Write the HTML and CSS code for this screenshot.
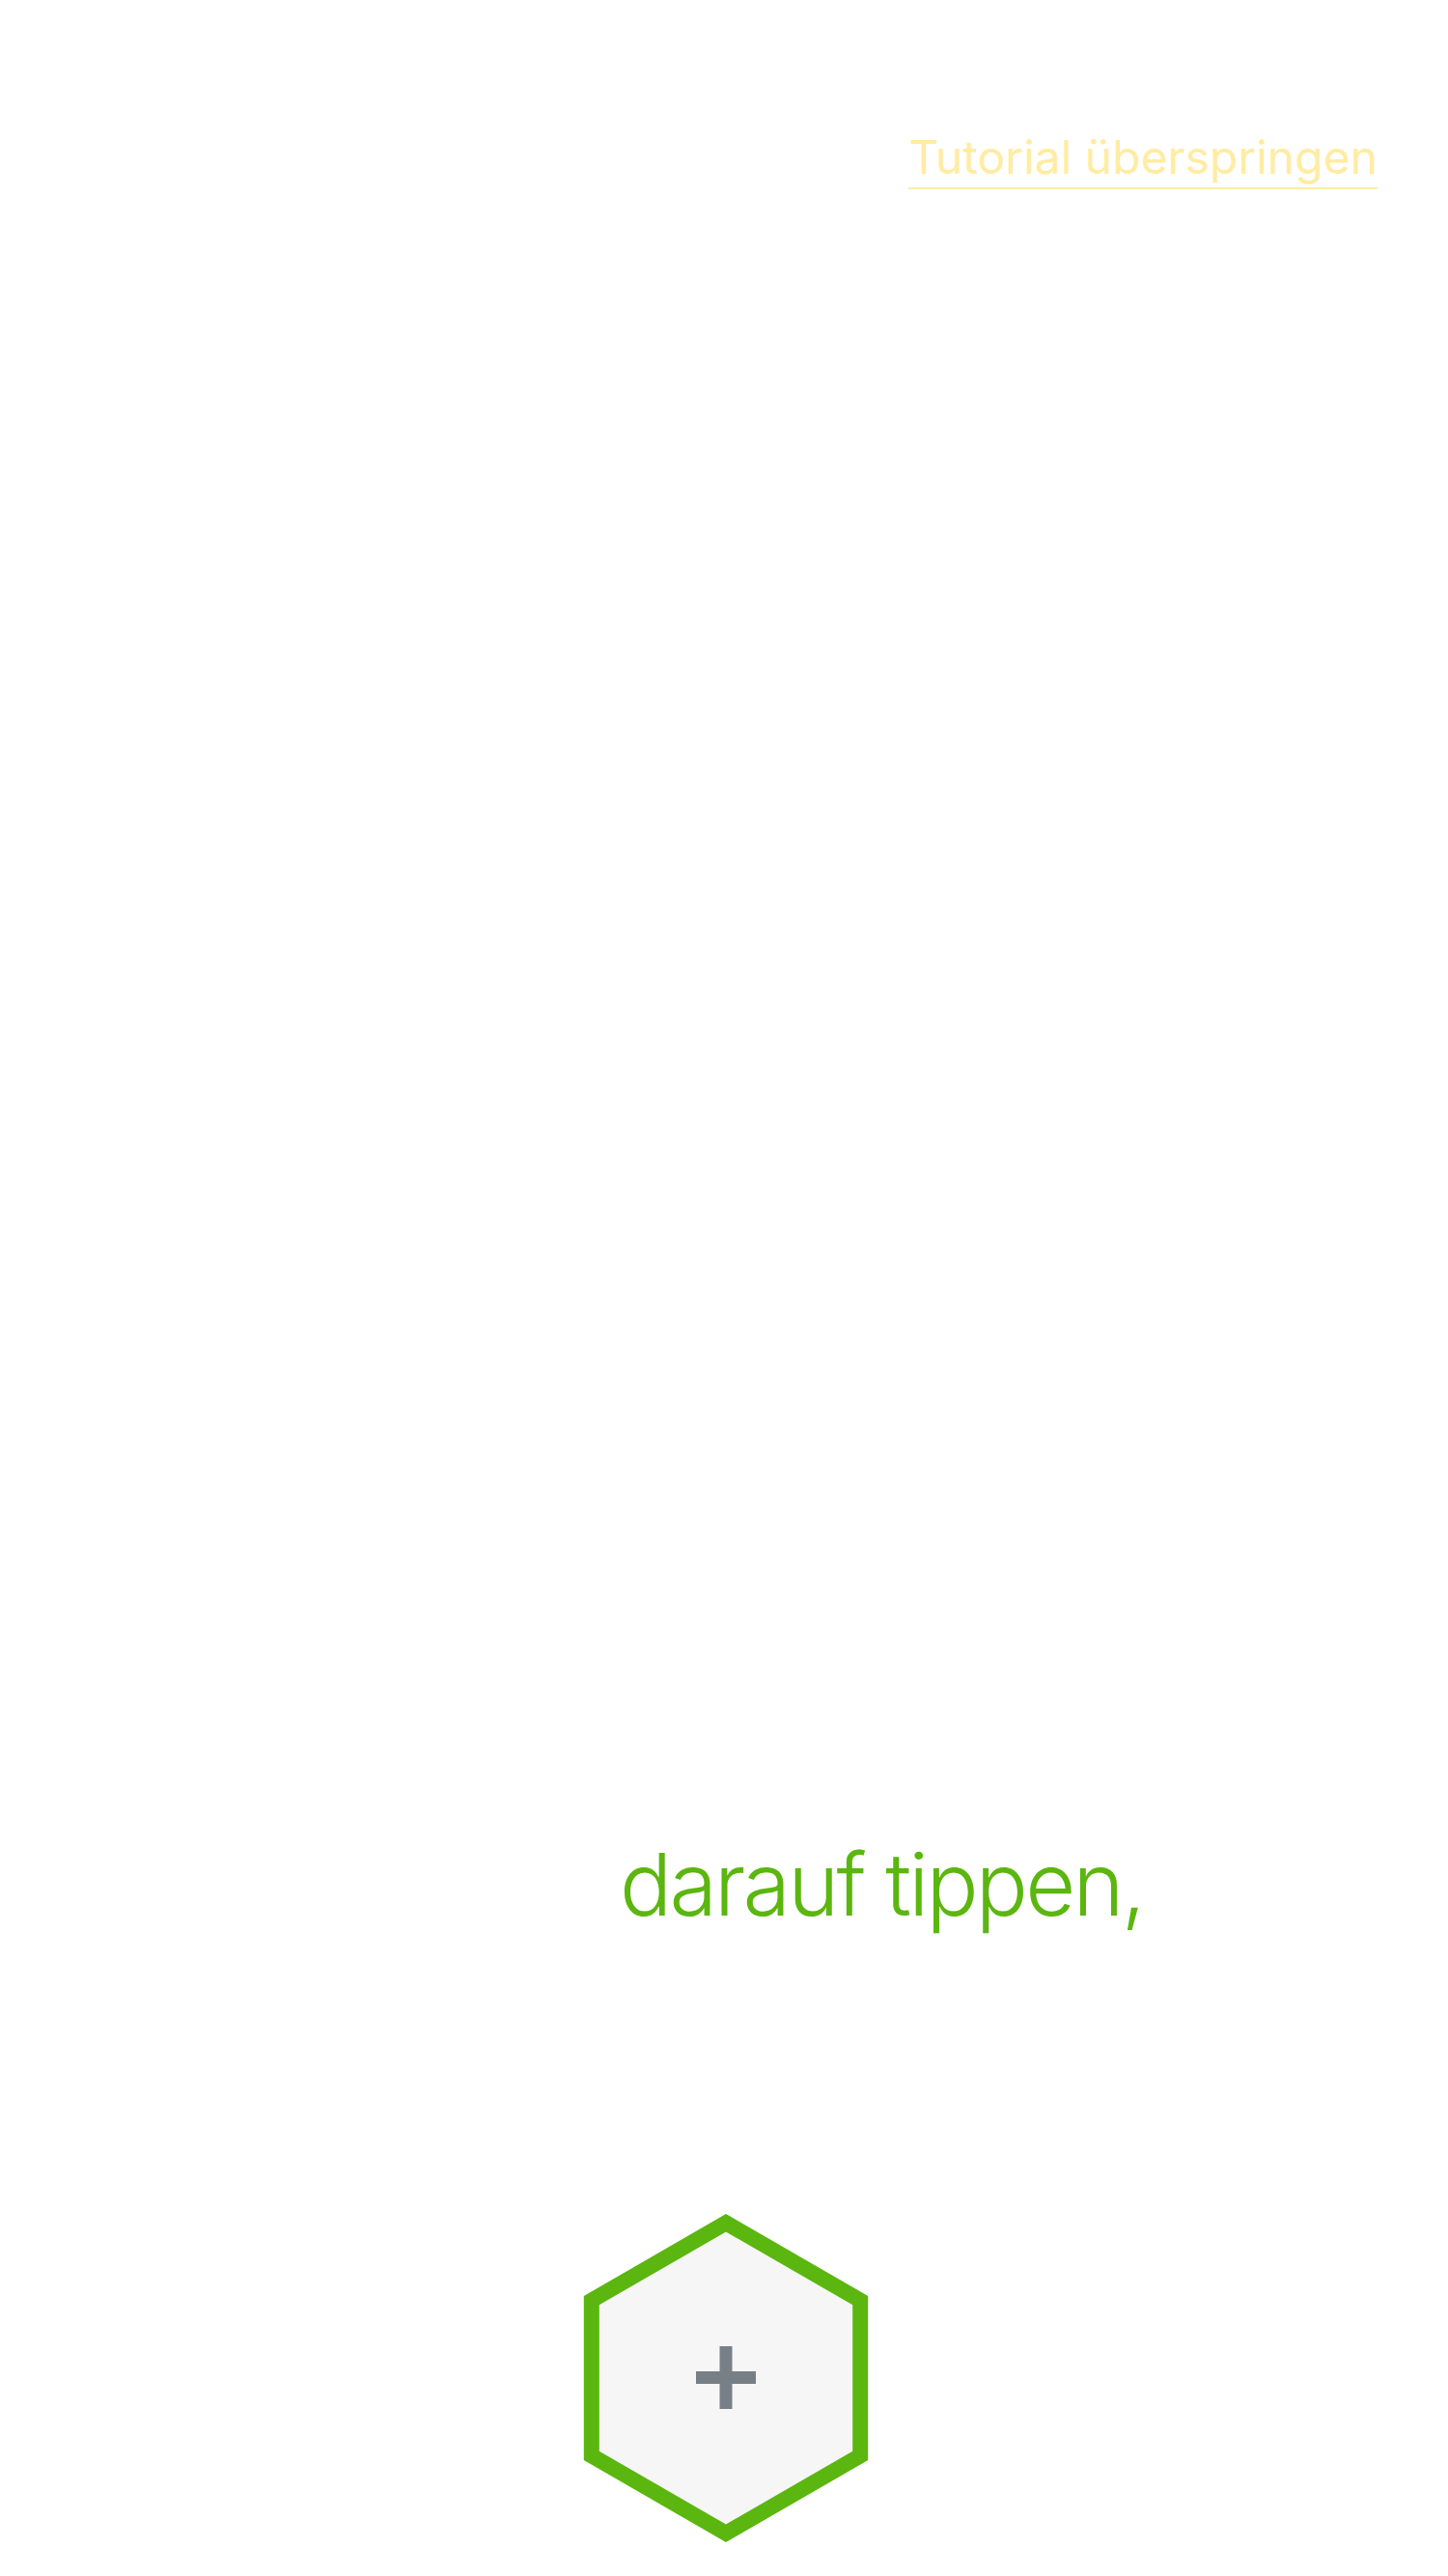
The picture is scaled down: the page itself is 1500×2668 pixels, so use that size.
FILE: index.html
```html
<!DOCTYPE html>
<html lang="de">
<head>
<meta charset="utf-8">
<title>Tutorial</title>
<link rel="stylesheet" href="styles.css">
</head>
<body>
<div class="page">
  <header class="top">
    <a class="skip" href="#">Tutorial überspringen</a>
  </header>
  <main class="content">
    <p class="hint">darauf tippen,</p>
    <div class="hex-wrap">
      <svg class="hex" width="296" height="340" viewBox="0 0 296 340" aria-label="Hinzufügen">
        <polygon points="148,9.24 287.2,89.62 287.2,250.38 148,330.76 8.8,250.38 8.8,89.62" fill="#f6f6f6" stroke="#5bb60f" stroke-width="16" stroke-linejoin="miter"/>
        <rect x="117" y="163" width="62" height="13" fill="#788087"/>
        <rect x="141.5" y="137" width="13" height="65" fill="#788087"/>
      </svg>
    </div>
  </main>
</div>
</body>
</html>
```

FILE: styles.css
```css
html, body {
  margin: 0;
  padding: 0;
  background: #ffffff;
}

.page {
  width: 1500px;
  height: 2668px;
  overflow: hidden;
  font-family: Inter, "Liberation Sans", sans-serif;
}

.top {
  display: flex;
  justify-content: flex-end;
  padding: 134px 73px 0 0;
}

.skip {
  display: inline-block;
  font-size: 48px;
  line-height: 58px;
  font-weight: 400;
  color: #ffeca3;
  text-decoration: none;
  padding-bottom: 2px;
  border-bottom: 2px solid #ffeca3;
}

.content {
  display: flex;
  flex-direction: column;
}

.hint {
  margin: 1701px 0 0 0;
  padding-left: 642px;
  font-size: 90px;
  line-height: 109px;
  font-weight: 300;
  letter-spacing: -2.8px;
  color: #5bb60f;
}

.hex-wrap {
  display: flex;
  justify-content: center;
  padding-left: 4px;
  margin-top: 287px;
}

.hex {
  display: block;
}
```
